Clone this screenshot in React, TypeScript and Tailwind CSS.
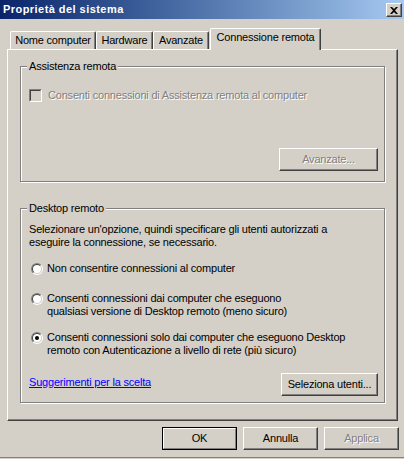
import type React from "react"

const ui = "font-['Liberation_Sans',Arial,sans-serif] text-[11px] leading-[13px] tracking-[-0.2px] text-black"
const grayText = "text-[#808080] [text-shadow:1px_1px_0_#fff]"

const Button: React.FC<{ width: string; disabled?: boolean; isDefault?: boolean; children: React.ReactNode }> = ({
  width,
  disabled,
  isDefault,
  children,
}) => {
  if (isDefault) {
    return (
      <div className={`${width} h-[23px] border border-black`}>
        <div className="flex h-full items-center justify-center border border-t-white border-l-white border-r-[#808080] border-b-[#808080]">
          {children}
        </div>
      </div>
    )
  }
  return (
    <div
      className={`${width} flex h-[23px] items-center justify-center border border-t-white border-l-white border-r-[#404040] border-b-[#404040] shadow-[inset_-1px_-1px_0_#808080] ${
        disabled ? grayText : ""
      }`}
    >
      {children}
    </div>
  )
}

const GroupBox: React.FC<{ title: string; className: string; children: React.ReactNode }> = ({ title, className, children }) => (
  <div className={`relative ml-[12px] w-[365px] border border-[#808080] shadow-[1px_1px_0_#fff,inset_1px_1px_0_#fff] ${className}`}>
    <span className="absolute left-[6px] top-[-7px] bg-[#D4D0C8] px-[2px]">{title}</span>
    {children}
  </div>
)

const Radio: React.FC<{ checked?: boolean }> = ({ checked }) => (
  <div className="mt-[1px] h-[12px] w-[12px] shrink-0 rounded-full border border-t-[#808080] border-l-[#808080] border-b-white border-r-white">
    <div className="flex h-full w-full items-center justify-center rounded-full border border-t-[#404040] border-l-[#404040] border-b-[#D4D0C8] border-r-[#D4D0C8] bg-white">
      {checked && <div className="h-[4px] w-[4px] rounded-full bg-black" />}
    </div>
  </div>
)

const Tab: React.FC<{ width: string; children: React.ReactNode }> = ({ width, children }) => (
  <div
    className={`${width} flex h-[18px] items-center justify-center rounded-t-[2px] border-t border-l border-r border-t-white border-l-white border-r-[#404040] shadow-[inset_-1px_0_0_#808080]`}
  >
    {children}
  </div>
)

export default function App() {
  return (
    <div className={`${ui} flex h-[459px] w-[404px] flex-col overflow-hidden bg-[#D4D0C8]`}>
      {/* caption */}
      <div className="flex h-[19px] shrink-0 items-start justify-between bg-linear-to-r from-[#0A246A] to-[#A6CAF0]">
        <span className="pl-[3px] pt-[3px] text-[11px] font-bold tracking-[0.45px] text-white">Proprietà del sistema</span>
        <div className="mr-[2px] mt-[3px] flex h-[14px] w-[16px] items-center justify-center border border-t-white border-l-white border-r-[#404040] border-b-[#404040] bg-[#D4D0C8] shadow-[inset_-1px_-1px_0_#808080]">
          <svg width="8" height="7" viewBox="0 0 8 7">
            <path d="M0 0h2l2 2 2-2h2L5 3.5 8 7H6L4 5 2 7H0l3-3.5z" fill="#000" />
          </svg>
        </div>
      </div>

      {/* tabs */}
      <div className="mt-[9px] flex h-[21px] items-end pl-[10px]">
        <Tab width="w-[86px]">Nome computer</Tab>
        <Tab width="w-[57px]">Hardware</Tab>
        <Tab width="w-[56px]">Avanzate</Tab>
        <div className="relative z-10 -mb-px ml-px flex h-[22px] w-[111px] justify-center rounded-t-[2px] border-t border-l border-r border-t-white border-l-white border-r-[#404040] bg-[#D4D0C8] pt-[2px] shadow-[inset_-1px_0_0_#808080]">
          Connessione remota
        </div>
      </div>

      {/* tab page */}
      <div className="ml-[7px] h-[372px] w-[391px] border border-t-white border-l-white border-r-[#404040] border-b-[#404040] pt-[16px] shadow-[inset_-1px_-1px_0_#808080]">
        <GroupBox title="Assistenza remota" className="h-[116px]">
          <div className="mt-[22px] flex items-center pl-[8px]">
            <div className="h-[13px] w-[13px] border border-t-[#808080] border-l-[#808080] border-b-white border-r-white">
              <div className="h-full w-full border border-t-[#404040] border-l-[#404040] border-b-[#D4D0C8] border-r-[#D4D0C8] bg-[#D4D0C8]" />
            </div>
            <span className={`ml-[6px] ${grayText}`}>Consenti connessioni di Assistenza remota al computer</span>
          </div>
          <div className="mt-[46px] flex justify-end pr-[6px]">
            <Button width="w-[99px]" disabled>
              Avanzate...
            </Button>
          </div>
        </GroupBox>

        <GroupBox title="Desktop remoto" className="mt-[26px] h-[195px]">
          <p className="mt-[14px] pl-[8px]">
            Selezionare un'opzione, quindi specificare gli utenti autorizzati a
            <br />
            eseguire la connessione, se necessario.
          </p>

          <div className="mt-[13px] flex items-start gap-[4px] pl-[10px]">
            <Radio />
            <span>Non consentire connessioni al computer</span>
          </div>

          <div className="mt-[17px] flex items-start gap-[4px] pl-[10px]">
            <Radio />
            <span>
              Consenti connessioni dai computer che eseguono
              <br />
              qualsiasi versione di Desktop remoto (meno sicuro)
            </span>
          </div>

          <div className="mt-[13px] flex items-start gap-[4px] pl-[10px]">
            <Radio checked />
            <span>
              Consenti connessioni solo dai computer che eseguono Desktop
              <br />
              remoto con Autenticazione a livello di rete (più sicuro)
            </span>
          </div>

          <div className="mt-[16px] flex items-center justify-between pl-[8px] pr-[6px]">
            <a className="mt-[-4px] text-[#0000FF] underline">Suggerimenti per la scelta</a>
            <Button width="w-[97px]">Seleziona utenti...</Button>
          </div>
        </GroupBox>
      </div>

      {/* dialog buttons */}
      <div className="mt-[6px] flex justify-end gap-[6px] pr-[5px]">
        <Button width="w-[75px]" isDefault>
          OK
        </Button>
        <Button width="w-[75px]">Annulla</Button>
        <Button width="w-[75px]" disabled>
          Applica
        </Button>
      </div>

      <div className="mb-[1px] mt-auto h-px bg-[#808080]" />
    </div>
  )
}
